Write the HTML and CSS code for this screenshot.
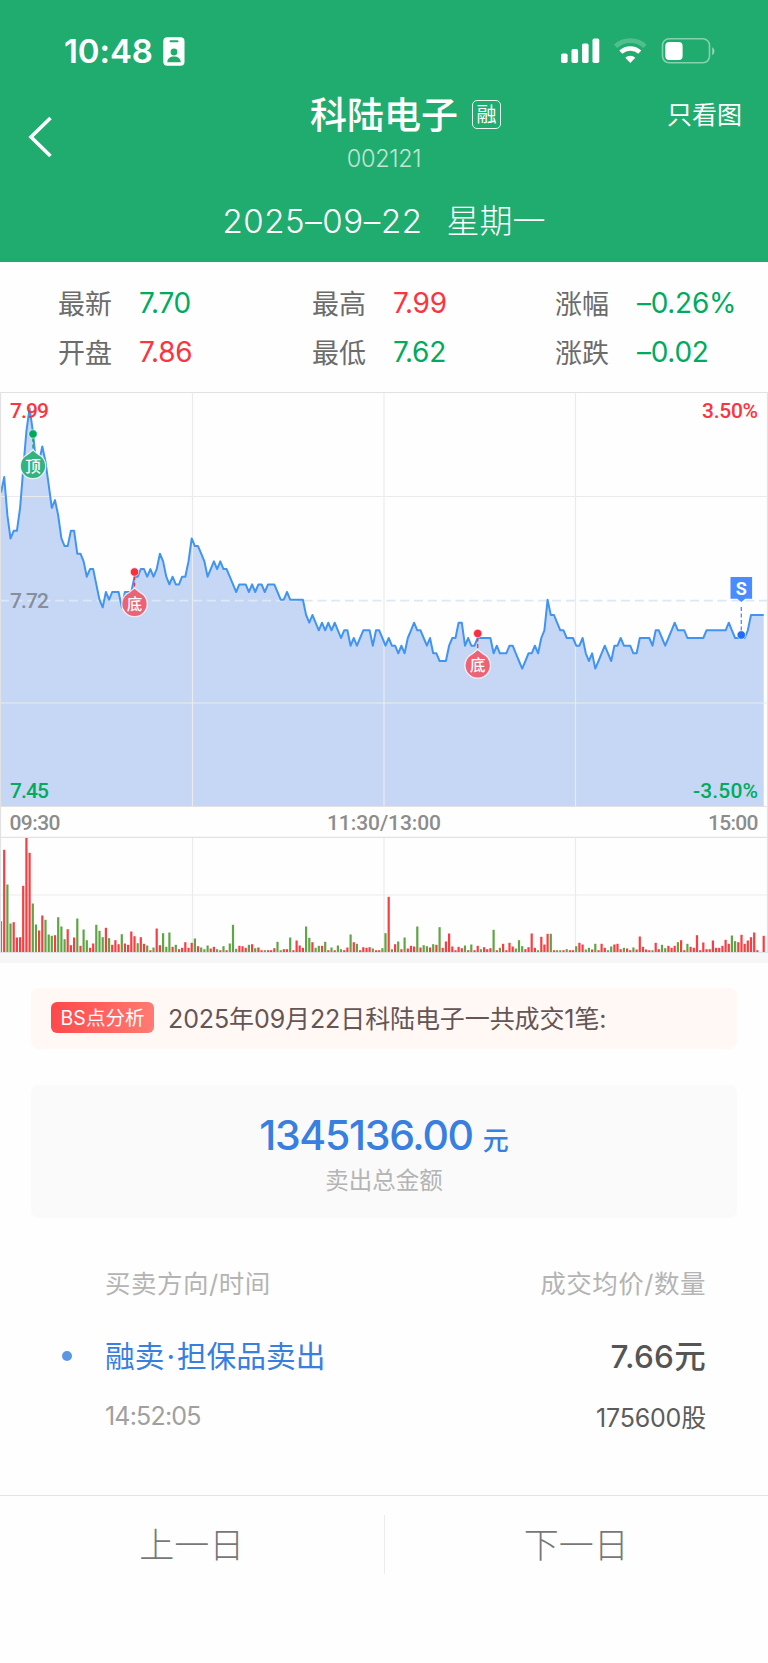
FILE: index.html
```html
<!DOCTYPE html>
<html lang="zh-CN">
<head>
  <meta charset="UTF-8">
  <meta name="viewport" content="width=device-width, initial-scale=1.0">
  <title>科陆电子 002121</title>
  <link rel="stylesheet" href="styles.css">
</head>
<body>
  <header class="header">
    <div class="status-bar">
      <div class="status-left">
        <span class="clock">10:48</span>
        <svg class="id-icon" width="22" height="29" viewBox="0 0 22 29">
          <rect x="0.3" y="0.3" width="21.2" height="28.4" rx="4" fill="#fff" />
          <rect x="6.5" y="3.2" width="9" height="2" rx="1" fill="#21ac6f" />
          <circle cx="11" cy="15" r="3.4" fill="#21ac6f" />
          <path d="M4.3 25.2c0-3.6 3-5.6 6.7-5.6s6.7 2 6.7 5.6z" fill="#21ac6f" />
        </svg>
      </div>
      <svg class="status-icons" width="156" height="26" viewBox="0 0 156 26">
        <g fill="#fff">
          <rect x="0" y="15.5" width="6.6" height="9.5" rx="1.8" />
          <rect x="10.5" y="11" width="6.6" height="14" rx="1.8" />
          <rect x="21" y="5.5" width="6.6" height="19.5" rx="1.8" />
          <rect x="31.5" y="0.5" width="6.8" height="24.5" rx="1.8" />
        </g>
        <g fill="none" stroke="#fff">
          <path d="M54.5 8.3a22 22 0 0 1 29.6 0" stroke-width="4.6" opacity="0.22" />
          <path d="M59.8 14.1a14.2 14.2 0 0 1 19 0" stroke-width="4.5" />
        </g>
        <path d="M69.3 25l-5-5.2a7.3 7.3 0 0 1 10 0z" fill="#fff" />
        <rect x="101.5" y="0.8" width="47" height="24" rx="6.5" fill="none" stroke="#fff" stroke-width="1.6" opacity="0.45" />
        <rect x="104.3" y="4" width="17.3" height="18" rx="4" fill="#fff" />
        <path d="M151.2 9.3c2.9 1.2 2.9 6.8 0 8z" fill="#fff" opacity="0.5" />
      </svg>
    </div>

    <div class="nav">
      <svg class="back" width="26" height="42" viewBox="0 0 26 42">
        <path d="M22.5 2L3 21l19.5 19" fill="none" stroke="#fff" stroke-width="3.6" />
      </svg>
      <div class="title-box">
        <div class="title"><span class="name">科陆电子</span><span class="margin-tag">融</span></div>
        <div class="code">002121</div>
      </div>
      <div class="only-chart">只看图</div>
    </div>
    <div class="date"><span class="day">2025–09–22</span><span>星期一</span></div>
  </header>

  <section class="quote">
    <span class="label">最新</span><span class="down">7.70</span>
    <span class="label">最高</span><span class="up">7.99</span>
    <span class="label">涨幅</span><span class="down">–0.26%</span>
    <span class="label">开盘</span><span class="up">7.86</span>
    <span class="label">最低</span><span class="down">7.62</span>
    <span class="label">涨跌</span><span class="down">–0.02</span>
  </section>

  <svg class="chart" width="768" height="561" viewBox="0 0 768 561">
    <path id="area" class="area" />
    <g class="grid">
      <path d="M192.5 0V414M384 0V414M575.5 0V414M0 104.5H768M0 311H768" />
      <path d="M192.5 445V561M384 445V561M575.5 445V561M0 503H768" />
    </g>
    <path class="base-line" d="M0 208.6H768" />
    <path id="price" class="price" />
    <g id="volume"></g>
    <path class="frame" d="M0 0.5H768M0 414.5H768M0 445.4H768M0 560.7H768M0.5 0V561M767.5 0V561" />

    <g class="axis">
      <text class="up" x="10" y="26" textLength="39">7.99</text>
      <text class="up" x="702" y="26" textLength="56">3.50%</text>
      <text class="mid" x="10" y="216" textLength="39">7.72</text>
      <text class="down" x="10" y="405.5" textLength="39">7.45</text>
      <text class="down" x="693" y="405.5" textLength="65">-3.50%</text>
      <text class="time" x="9.5" y="438" textLength="51">09:30</text>
      <text class="time" x="327" y="438" textLength="114">11:30/13:00</text>
      <text class="time" x="708" y="438" textLength="50.5">15:00</text>
    </g>

    <g class="marker top" transform="translate(33 42)">
      <path class="stem" d="M0 4V17" />
      <circle class="dot" r="4.2" />
      <path class="pin" d="M0 16L5.5 20.5A12.7 12.7 0 1 1 -5.5 20.5Z" />
      <text y="37.5">顶</text>
    </g>
    <g class="marker bottom" transform="translate(134.5 180)">
      <path class="stem" d="M0 4V17" />
      <circle class="dot" r="4.2" />
      <path class="pin" d="M0 16L5.5 20.5A12.7 12.7 0 1 1 -5.5 20.5Z" />
      <text y="37.5">底</text>
    </g>
    <g class="marker bottom" transform="translate(477.7 241.5)">
      <path class="stem" d="M0 4V17" />
      <circle class="dot" r="4.2" />
      <path class="pin" d="M0 16L5.5 20.5A12.7 12.7 0 1 1 -5.5 20.5Z" />
      <text y="37.5">底</text>
    </g>
    <g class="marker sell" transform="translate(741.3 243)">
      <path class="stem" d="M0 -28V-4" />
      <circle class="dot" r="4.2" />
      <path class="flag" d="M-10.8 -58H10.8V-36.3H4L0 -33L-4 -36.3H-10.8Z" />
      <text y="-40.5">S</text>
    </g>
  </svg>

  <main class="detail">
    <div class="analysis">
      <span class="bs-tag">BS点分析</span>
      <span class="summary">2025年09月22日科陆电子一共成交1笔:</span>
    </div>

    <div class="total">
      <div class="amount">1345136.00<span class="unit">元</span></div>
      <div class="caption">卖出总金额</div>
    </div>

    <div class="trades">
      <div class="row head"><span>买卖方向/时间</span><span>成交均价/数量</span></div>
      <div class="row deal"><span class="side">融卖<span class="sep">·</span>担保品卖出</span><span class="price-text">7.66元</span></div>
      <div class="row sub"><span class="time-text">14:52:05</span><span class="count">175600股</span></div>
    </div>
  </main>

  <footer class="pager">
    <a class="prev">上一日</a>
    <a class="next">下一日</a>
  </footer>

  <script src="chart.js"></script>
</body>
</html>
```
FILE: styles.css
```css
body { margin: 0; background: #fefefe; color: #666; font-family: Inter, "Noto Sans CJK SC", sans-serif; }

.header { height: 262px; background: #21ac6f; color: #fff; overflow: hidden; }
.status-bar { display: flex; justify-content: space-between; align-items: center; height: 26px; padding: 38px 51px 0 64px; }
.status-left { display: flex; align-items: center; gap: 10px; }
.clock { font-size: 33px; font-weight: 600; line-height: 26px; letter-spacing: -0.1px; }
.id-icon { display: block; }
.nav { display: grid; grid-template-columns: 120px 1fr 120px; margin-top: 24px; height: 92px; }
.back { margin: 28px 0 0 28px; }
.title-box { text-align: center; }
.title { display: flex; align-items: center; justify-content: center; gap: 14px; height: 49px; padding-left: 43px; }
.name { font-size: 37px; font-weight: 500; white-space: nowrap; }
.margin-tag { width: 27px; height: 27px; margin-top: 4px; border: 1px solid rgba(255,255,255,0.9); border-radius: 5px; font-size: 20px; line-height: 29px; }
.code { font-size: 23.5px; font-weight: 300; line-height: 43px; opacity: 0.7; letter-spacing: -0.3px; }
.only-chart { font-size: 25px; line-height: 54px; text-align: right; padding-right: 26px; }
.date { display: flex; justify-content: center; gap: 24px; font-size: 33px; line-height: 82px; font-weight: 300; }
.day { letter-spacing: 0.6px; }

.quote {
  display: grid;
  grid-template-columns: 81px 173px 81px 162px 82px 1fr;
  grid-auto-rows: 49px;
  align-items: center;
  height: 130px;
  padding: 16px 0 0 58px;
  box-sizing: border-box;
  font-size: 27px;
  white-space: nowrap;
}
.label { color: #6c6c6c; }
.quote .up { color: #fb3440; font-size: 28px; padding-top: 1px; letter-spacing: -0.3px; }
.quote .down { color: #00ab60; font-size: 28px; padding-top: 1px; letter-spacing: -0.3px; }

.chart { display: block; font-family: Roboto, "Noto Sans CJK SC", sans-serif; }
.area { fill: #c5d7f4; }
.price { fill: none; stroke: #4294f4; stroke-width: 2; stroke-linejoin: round; }
.grid path { fill: none; stroke: #ebebed; stroke-width: 1.2; }
.frame { fill: none; stroke: #e2e2e4; stroke-width: 1.2; }
.base-line { stroke: #dde8f5; stroke-width: 1.6; stroke-dasharray: 9 4.8; }
.axis { font-size: 21px; font-weight: 500; }
.axis .up { fill: #fb3440; }
.axis .down { fill: #00ab60; }
.axis .mid { fill: #888e99; }
.axis .time { fill: #8c8c8c; }
.bar-up { fill: #fd3c40; }
.bar-down { fill: #5fa544; }
.marker text { fill: #fff; font-size: 15.5px; font-weight: 500; text-anchor: middle; }
.marker .dot { stroke: #fff; stroke-opacity: 0.6; stroke-width: 1; }
.stem { stroke-width: 1.3; stroke-dasharray: 4 2.5; }
.pin { stroke: #fff; stroke-opacity: 0.8; stroke-width: 1.3; }
.top .dot { fill: #00a95b; }
.top .stem { stroke: #00a95b; }
.top .pin { fill: #34b27f; }
.bottom .dot { fill: #fa2f3e; }
.bottom .stem { stroke: #fa2f3e; }
.bottom .pin { fill: #ea6376; }
.sell .dot { fill: #1e6dfa; }
.sell .stem { stroke: #4b8bfd; }
.flag { fill: #4a8bfd; }
.marker.sell text { font-size: 18px; font-weight: 700; }

.detail { padding: 25px 31px 0; border-top: 10px solid #f6f6f6; }
.analysis { display: flex; align-items: center; height: 61px; padding: 0 20px; background: #fff8f5; border-radius: 8px; }
.bs-tag { width: 103px; height: 31px; margin: -3px 14px 0 0; border-radius: 6px; background: linear-gradient(100deg, #ff474a, #ff7c74); color: #fff; font-size: 19.5px; line-height: 33px; text-align: center; white-space: nowrap; }
.summary { color: #665555; font-size: 25px; white-space: nowrap; line-height: 61px; padding-top: 2px; letter-spacing: -0.1px; }

.total { margin-top: 36px; height: 133px; background: #fafafa; border-radius: 8px; text-align: center; overflow: hidden; }
.amount { margin-top: 19px; font-size: 41px; line-height: 62px; font-weight: 500; color: #377fe0; letter-spacing: -1.3px; }
.unit { margin-left: 10px; font-size: 26px; letter-spacing: 0; }
.caption { margin-top: -8px; font-size: 23.5px; line-height: 34px; color: #b4b4b4; }

.trades { padding: 32px 31px 0 74px; }
.row { display: flex; justify-content: space-between; align-items: center; }
.head { height: 62px; font-size: 25.5px; letter-spacing: 0.5px; color: #b4b4b4; }
.deal { height: 84px; font-size: 29.7px; }
.side { color: #377fe0; position: relative; }
.sep { margin: 0 2px; }
.side::before { content: ""; position: absolute; left: -43px; top: 50%; width: 10px; height: 10px; margin-top: -3px; border-radius: 50%; background: #5c97e5; }
.price-text { font-size: 31.5px; font-weight: 500; color: #555; letter-spacing: 0.3px; }
.sub { height: 39px; font-size: 25px; }
.time-text { color: #a0a0a0; letter-spacing: -0.8px; }
.count { color: #5c5c5c; letter-spacing: -0.2px; }

.pager { display: flex; margin-top: 60px; padding-top: 19px; border-top: 1px solid #e4e4e4; height: 148px; box-sizing: border-box; }
.pager a { flex: 1; height: 59px; line-height: 61px; text-align: center; font-size: 35px; font-weight: 300; color: #777; }
.prev { border-right: 1px solid #ececec; }
```
FILE: chart.js
```js
// minute closes, in cents from the previous close (7.72)
const closes = [
  14,16,11,8,9,9,12,17,22,25,22,18,18,20,18,15,12,13,11,8,7,7,9,9,6,6,5,3,4,4,
  2,0,-1,1,0,1,1,1,-1,1,1,1,3,3,4,4,3,4,3,4,6,5,3,2,3,2,2,3,3,5,
  8,7,7,6,5,3,4,5,4,5,4,4,3,2,1,2,2,2,1,2,1,2,2,1,2,2,2,1,0,0,
  1,0,0,0,0,0,-2,-3,-2,-3,-4,-3,-4,-3,-4,-3,-4,-5,-4,-4,-6,-5,-6,-5,-4,-4,-4,-6,-4,-4,
  -5,-6,-5,-6,-6,-7,-6,-7,-5,-4,-3,-4,-4,-5,-6,-5,-7,-7,-8,-8,-8,-6,-5,-5,-3,-3,-6,-5,-6,-6,
  -5,-5,-5,-5,-5,-7,-6,-7,-7,-7,-6,-6,-7,-8,-9,-8,-7,-7,-6,-7,-5,-4,0,-2,-2,-3,-4,-4,-5,-5,
  -5,-6,-6,-5,-7,-8,-7,-9,-8,-7,-6,-7,-8,-6,-6,-5,-6,-6,-6,-7,-7,-5,-5,-5,-5,-6,-4,-4,-5,-6,
  -5,-4,-3,-4,-4,-4,-5,-5,-5,-5,-5,-5,-4,-4,-4,-4,-4,-4,-4,-3,-4,-5,-5,-5,-5,-4,-2,-2,-2,-2,-2
];

// volume per minute, r = rising, g = falling
const volumes = `94r 308r 204g 87g 91r 45r 46r 200r 345r 299r 147g 84g 66r 111r 98g 54g 50g 52r 106g 78g
40g 70r 22r 45r 102g 20r 69g 37g 14r 27r 83g 65g 46g 74r 43g 23r 37r 25r 55g 27r
23r 63r 49r 28g 46r 26r 21g 7r 15g 72r 22r 58g 17g 60g 17r 23g 10r 14r 31r 14r
29r 42g 19r 15g 10g 21g 12r 17r 10g 7r 19g 7r 27g 83g 11g 20r 19r 14r 23g 25r
13g 15r 7r 7g 7r 7r 13r 32g 7g 10r 10r 45g 7r 36r 21r 14r 78g 44g 31r 14g
20g 20r 32g 7r 15g 7r 21g 10g 7r 15r 54g 31r 26g 7r 16r 14r 16r 12g 7r 7r
13g 58g 167r 10g 25r 33g 10r 45g 12r 20r 18r 78g 15r 22g 19g 15r 25g 23r 76g 14r
33r 57r 18r 7r 17r 13r 21g 7r 24g 7r 20r 10g 16r 10r 13r 68g 7r 14g 26r 7r
29r 18r 12g 37g 19g 10r 16r 57r 14r 7g 47r 24r 56r 56g 7r 7g 7g 7r 10g 7r
7r 19g 29r 24r 9g 14g 9r 26g 7r 26r 14r 7g 18g 24r 26r 10r 14g 12r 7r 15g
9r 48r 17r 9r 7r 7g 29r 10r 23g 13g 20r 14r 20r 31g 37r 7r 26g 17r 14r 52r
7r 30r 10r 10r 36r 14r 14r 20r 38r 26r 51g 34g 31r 53r 26r 36r 46r 60r 7r 0r
50r`.split(/\s+/);

const step = 3.178;
const x = i => 1 + i * step;
const points = closes.map((c, i) => `${x(i).toFixed(1)} ${(207.7 - c * 7.66).toFixed(1)}`);
const line = 'M' + points.join('L');

document.getElementById('price').setAttribute('d', line);
document.getElementById('area').setAttribute('d', `${line}V414H1Z`);

document.getElementById('volume').innerHTML = volumes.map((v, i) => {
  const h = parseInt(v) / 3;
  const cls = v.endsWith('r') ? 'bar-up' : 'bar-down';
  return `<rect class="${cls}" x="${(x(i) - 1.1).toFixed(1)}" y="${(560.5 - h).toFixed(1)}" width="2.2" height="${h.toFixed(1)}" />`;
}).join('');
```
